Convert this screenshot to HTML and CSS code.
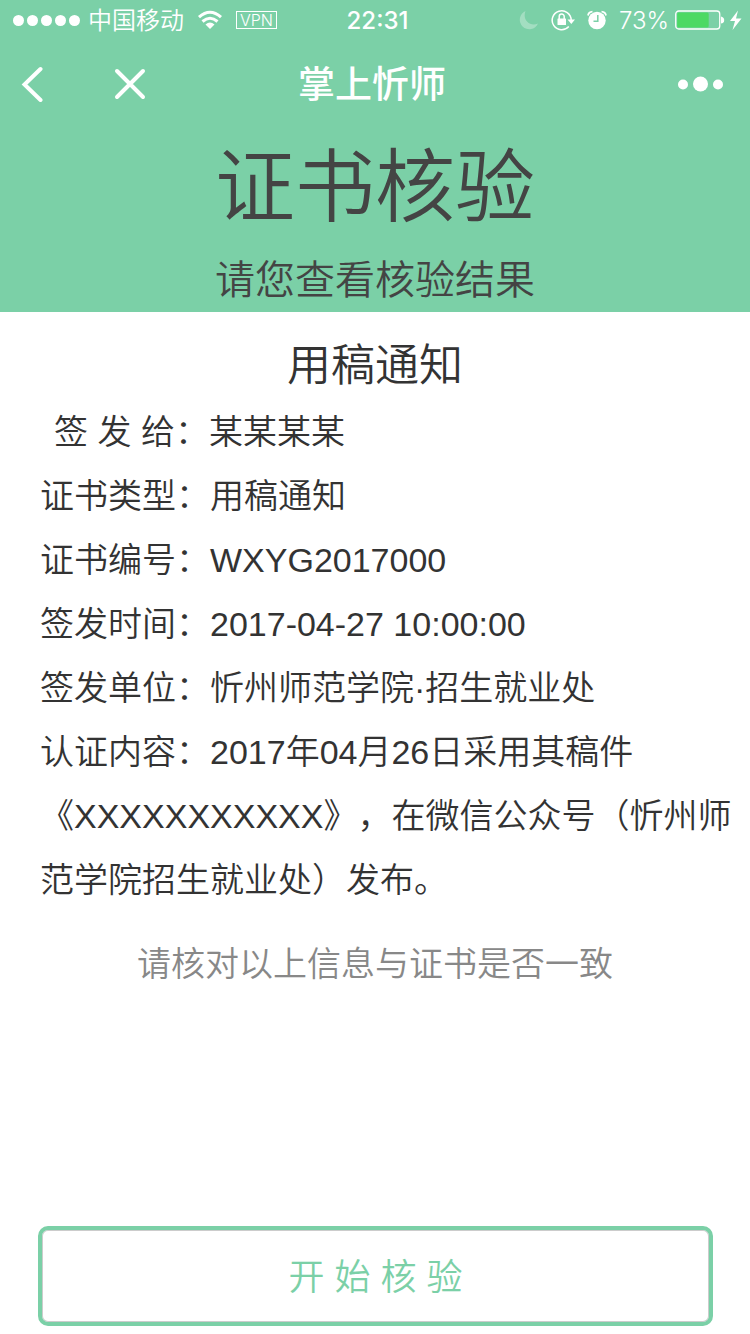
FILE: index.html
```html
<!DOCTYPE html>
<html lang="zh-CN">
<head>
<meta charset="utf-8">
<meta name="viewport" content="width=device-width, initial-scale=1">
<title>掌上忻师</title>
<link rel="stylesheet" href="styles.css">
</head>
<body>
<div class="page">
  <header class="header">
    <div class="status">
      <div class="status-side">
        <svg width="68" height="12" viewBox="0 0 68 12" fill="#fff"><circle cx="6.500" cy="6.500" r="5.500"/><circle cx="20.500" cy="6.500" r="5.500"/><circle cx="34.500" cy="6.500" r="5.500"/><circle cx="48.500" cy="6.500" r="5.500"/><circle cx="62.500" cy="6.500" r="5.500"/></svg>
        <span class="carrier">中国移动</span>
        <svg class="wifi" width="26" height="20" viewBox="0 0 26 20" fill="none" stroke="#fff" stroke-width="3"><path d="M2 7.200Q13-2.800 24 7.200"/><path d="M5.500 11.500Q13 5 20.500 11.500"/><path d="M13 19l-4.500-4.500q4.500-4 9 0z" fill="#fff" stroke="none"/></svg>
        <span class="vpn">VPN</span>
      </div>
      <span class="clock">22:31</span>
      <div class="status-side status-right">
        <svg width="20" height="20" viewBox="0 0 20 20" fill="#fff" opacity=".3"><path d="M6.500 1A9.500 9.500 0 1 0 19 13.500C11 17 3 10 6.500 1z"/></svg>
        <svg class="lock" width="24" height="22" viewBox="0 0 24 22" fill="none" stroke="#fff" stroke-width="1.500"><path d="M17.800 17.600A9.500 9.500 0 1 1 20.200 11"/><path d="M16.500 10.500h7.500l-3.700 4.500z" fill="#fff" stroke="none"/><rect x="6.500" y="9.500" width="8.500" height="6.500" rx=".5" fill="#fff" stroke="none"/><path d="M8.200 10V7.500a2.500 2.500 0 0 1 5 0V10"/></svg>
        <svg class="alarm" width="20" height="20" viewBox="0 0 20 20"><circle cx="10" cy="10.500" r="8.700" fill="#fff"/><path d="M1 5.500Q1.500 2 5.500 1.700M19 5.500Q18.500 2 14.500 1.700" fill="none" stroke="#fff" stroke-width="1.800"/><path d="M10.800 5v6.300H6.500" fill="none" stroke="#7bd0a7" stroke-width="1.500"/></svg>
        <span class="percent">73%</span>
        <svg class="battery" width="68" height="20" viewBox="0 0 68 20"><rect x=".75" y="1" width="44" height="18" rx="3" fill="none" stroke="#fff" stroke-width="1.300"/><rect x="2.200" y="2.500" width="31.500" height="15" rx="1.500" fill="#4cd964"/><path d="M46 6.500q4 1 3 5-.5 2-3 2z" fill="#fff"/><path d="M63 .5L55 11h5l-2.500 9L66.500 8.500h-5.500z" fill="#fff"/></svg>
      </div>
    </div>
    <nav class="nav">
      <div class="nav-side">
        <button class="icon-button" aria-label="返回"><svg width="24" height="36" viewBox="0 0 24 36" fill="none" stroke="#fff" stroke-width="4" stroke-linecap="round"><path d="M20.500 3L4.500 18.500l16 15.500"/></svg></button>
        <button class="icon-button" aria-label="关闭"><svg width="32" height="32" viewBox="0 0 32 32" stroke="#fff" stroke-width="4" stroke-linecap="round"><path d="M3 3l26 26M29 3L3 29"/></svg></button>
      </div>
      <span class="nav-title">掌上忻师</span>
      <div class="nav-side nav-right">
        <button class="icon-button" aria-label="更多"><svg width="46" height="16" viewBox="0 0 46 16" fill="#fff"><circle cx="5" cy="8.500" r="5"/><circle cx="22.500" cy="8" r="7.500"/><circle cx="40" cy="8.500" r="5"/></svg></button>
      </div>
    </nav>
    <h1 class="title">证书核验</h1>
    <p class="subtitle">请您查看核验结果</p>
  </header>
  <main class="main">
    <h2 class="heading">用稿通知</h2>
    <div class="details">
      <p class="row row-recipient">签 发 给：某某某某</p>
      <p class="row">证书类型：用稿通知</p>
      <p class="row">证书编号：WXYG2017000</p>
      <p class="row">签发时间：2017-04-27 10:00:00</p>
      <p class="row">签发单位：忻州师范学院·招生就业处</p>
      <p class="row">认证内容：2017年04月26日采用其稿件《XXXXXXXXXXX》，在微信公众号（忻州师范学院招生就业处）发布。</p>
    </div>
    <p class="note">请核对以上信息与证书是否一致</p>
  </main>
  <footer class="footer"><button class="start">开 始 核 验</button></footer>
</div>
</body>
</html>
```
FILE: styles.css
```css
* { box-sizing: border-box; }
body, h1, h2, p { margin: 0; font-weight: 350; }
body { background: #fff; color: #333; font-family: "Liberation Sans", "Noto Sans CJK SC", sans-serif; text-spacing-trim: space-all; }
svg { display: block; flex: none; }
.page { display: flex; flex-direction: column; min-height: 100vh; }
.header { background: #7bd0a7; text-align: center; }
.status { display: flex; align-items: center; height: 40px; padding: 0 8px 0 12px; color: #fff; }
.status-side { display: flex; flex: 1; align-items: center; }
.status-right { justify-content: flex-end; }
.carrier { font-size: 24px; line-height: 40px; margin-left: 8px; padding-top: 2px; white-space: nowrap; }
.wifi { margin-left: 13px; }
.vpn { border: 1px solid #fff; font: 300 16px/16px Inter, sans-serif; margin-left: 13px; padding: 0 3px; }
.clock { font: 500 24px/40px Inter, sans-serif; padding-top: 2px; }
.lock { margin-left: 12px; }
.alarm { margin-left: 12px; }
.percent { font: 300 24px/40px Inter, sans-serif; margin-left: 12px; padding-top: 2px; }
.battery { margin-left: 6px; }
.status-right { margin-right: -1px; }
.nav { display: flex; align-items: center; height: 88px; padding: 0 26px 0 20px; color: #fff; }
.nav-side { display: flex; flex: 1; align-items: center; gap: 70px; }
.nav-right { justify-content: flex-end; }
.icon-button { background: none; border: 0; padding: 0; }
.nav-title { font-size: 37px; line-height: 48px; font-weight: 500; padding-top: 4px; }
.title { color: #444; font-size: 80px; line-height: 120px; }
.subtitle { color: #444; font-size: 40px; line-height: 64px; }
.main { flex: 1; padding: 20px 16px 0 40px; }
.heading { font-size: 44px; line-height: 68px; padding-right: 24px; text-align: center; }
.row { font-size: 34px; line-height: 64px; }
.row-recipient { padding-left: 14px; }
.note { color: #888; font-size: 34px; line-height: 64px; margin-top: 20px; padding-right: 24px; text-align: center; }
.footer { padding: 0 37px 8px 38px; }
.start { background: #fff; border: 4px solid #7bd0a7; border-radius: 10px; box-shadow: inset 0 0 0 1px #ccc; color: #7bd0a7; font-family: inherit; font-size: 36px; font-weight: 350; height: 100px; padding: 0 0 4px; width: 100%; }
```
